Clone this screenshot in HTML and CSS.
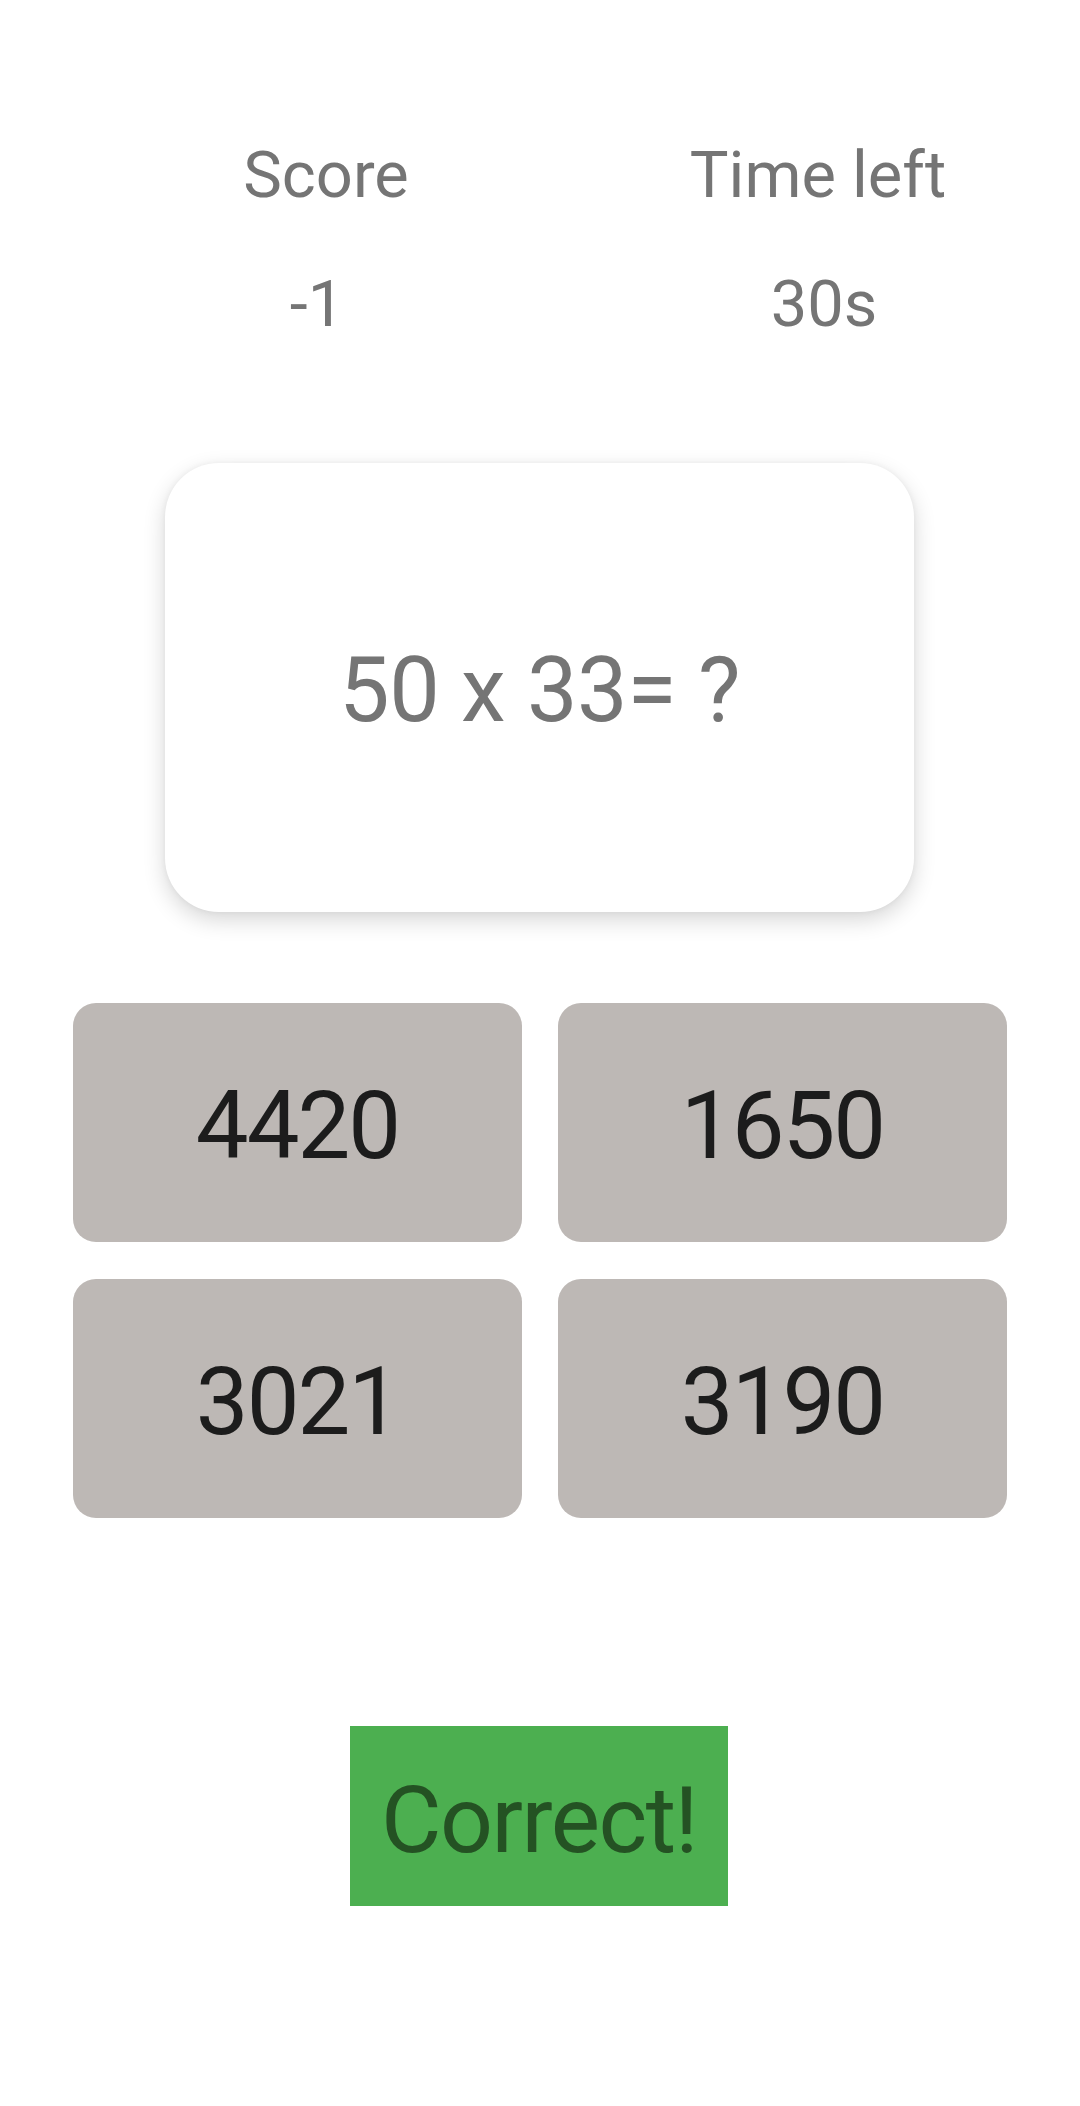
FILE: index.html
```html
<!DOCTYPE html>
<html lang="en">
<head>
<meta charset="utf-8">
<title>Math Quiz</title>
<link rel="stylesheet" href="styles.css">
</head>
<body>
<main class="screen">
  <section class="stats">
    <div class="stat stat-score">
      <div class="stat-label">Score</div>
      <div class="stat-value">-1</div>
    </div>
    <div class="stat stat-time">
      <div class="stat-label">Time left</div>
      <div class="stat-value">30s</div>
    </div>
  </section>

  <section class="question-card">
    <div class="question">50 x 33= ?</div>
  </section>

  <section class="answers">
    <button class="answer">4420</button>
    <button class="answer">1650</button>
    <button class="answer">3021</button>
    <button class="answer">3190</button>
  </section>

  <section class="result-wrap">
    <div class="result">Correct!</div>
  </section>
</main>
</body>
</html>
```

FILE: styles.css
```css
html, body {
  margin: 0;
  padding: 0;
  background: #ffffff;
}

body {
  width: 1080px;
  height: 2106px;
  overflow: hidden;
  font-family: Roboto, "Noto Sans", "Liberation Sans", sans-serif;
}

.screen {
  display: flex;
  flex-direction: column;
  align-items: stretch;
}

.stats {
  display: flex;
  padding-top: 138px;
}

.stat {
  display: flex;
  flex-direction: column;
  align-items: center;
  gap: 54px;
  color: #757575;
  font-size: 65px;
  line-height: 75px;
}

.stat-score {
  width: 340px;
  margin-left: 156px;
}

.stat-time {
  width: 340px;
  margin-left: 152px;
}

.stat-score .stat-value {
  padding-right: 18px;
}

.stat-time .stat-value {
  padding-left: 12px;
}

.question-card {
  align-self: center;
  width: 749px;
  height: 449px;
  margin-top: 121px;
  margin-left: -1px;
  background: #ffffff;
  border-radius: 54px;
  box-shadow: 0 8px 22px rgba(0, 0, 0, 0.16), 0 0 6px rgba(0, 0, 0, 0.05);
  display: flex;
  align-items: center;
  justify-content: center;
}

.question {
  color: #757575;
  font-size: 90px;
  line-height: 106px;
  letter-spacing: -0.5px;
  margin-top: 6px;
}

.answers {
  display: grid;
  grid-template-columns: 449px 449px;
  grid-auto-rows: 239px;
  column-gap: 36px;
  row-gap: 37px;
  margin: 91px 0 0 73px;
}

.answer {
  border: none;
  margin: 0;
  padding: 6px 0 0 0;
  background: #bdb8b5;
  border-radius: 23px;
  font-family: Roboto, "Noto Sans", "Liberation Sans", sans-serif;
  font-size: 94px;
  line-height: 110px;
  letter-spacing: -2px;
  color: #1c1c1c;
  display: flex;
  align-items: center;
  justify-content: center;
}

.result-wrap {
  display: flex;
  justify-content: center;
  margin-top: 208px;
  padding-right: 1px;
}

.result {
  width: 378px;
  height: 180px;
  margin-left: -1px;
  padding-top: 10px;
  box-sizing: border-box;
  background: #4caf50;
  color: #245223;
  font-size: 93px;
  line-height: 110px;
  letter-spacing: -1.5px;
  display: flex;
  align-items: center;
  justify-content: center;
}
```
